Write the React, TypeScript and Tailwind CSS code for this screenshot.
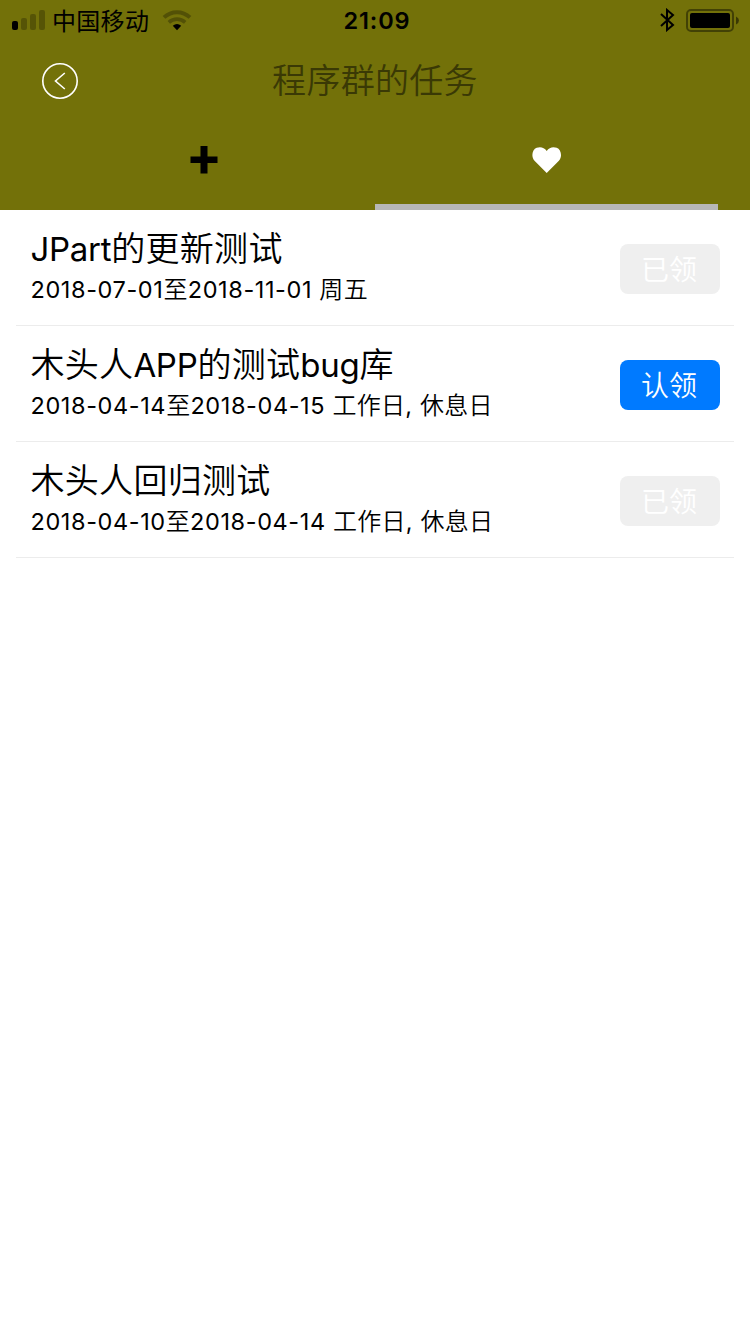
import React from "react";

type Task = { title: string; period: string; claimed: boolean };

const tasks: Task[] = [
  { title: "JPart的更新测试", period: "2018-07-01至2018-11-01 周五", claimed: true },
  { title: "木头人APP的测试bug库", period: "2018-04-14至2018-04-15 工作日, 休息日", claimed: false },
  { title: "木头人回归测试", period: "2018-04-10至2018-04-14 工作日, 休息日", claimed: true },
];

function StatusBar() {
  return (
    <div className="flex h-10 items-center justify-between pl-3 pr-2.5 text-black">
      <div className="flex w-[240px] items-center">
        <svg width="34" height="22" viewBox="0 0 34 22">
          <rect x="0" y="12" width="6" height="9" rx="2" />
          <rect x="9" y="9" width="6" height="12" rx="2" fillOpacity=".25" />
          <rect x="18" y="5" width="6" height="16" rx="2" fillOpacity=".25" />
          <rect x="27" y="1" width="6" height="20" rx="2" fillOpacity=".25" />
        </svg>
        <span className="ml-1.5 pt-[3px] text-[24px] leading-[37px] tracking-[0.3px]">中国移动</span>
        <svg className="ml-[13px] mt-px" width="30" height="22" viewBox="0 0 30 22" fill="none">
          <path d="M2 7.400C9.500.4 20.500.4 28 7.400" stroke="#000" strokeOpacity=".28" strokeWidth="4" />
          <path d="M6.800 12.300c4.700-4.300 11.700-4.300 16.400 0" stroke="#000" strokeOpacity=".28" strokeWidth="3.600" />
          <path d="M10.800 15.800q4.200-3.600 8.400 0L15 20.200Z" fill="#000" />
        </svg>
      </div>
      <span className="pl-0.5 pt-0.5 text-[23.5px] font-semibold leading-[38px] tracking-[0.9px]">21:09</span>
      <div className="flex w-[240px] items-center justify-end">
        <svg width="15" height="24" viewBox="0 0 15 24" fill="none" stroke="#000" strokeWidth="2">
          <path d="M1 6l12 11-6 5V2l6 5L1 18" />
        </svg>
        <svg className="ml-[11px]" width="54" height="24" viewBox="0 0 54 24">
          <rect x="1" y="2" width="46" height="21" rx="4" fill="none" stroke="#000" strokeOpacity=".42" strokeWidth="2" />
          <rect x="4" y="5" width="40" height="15" rx="2" />
          <path d="M50 8.500q3 1.500 3 4t-3 4Z" fillOpacity=".5" />
        </svg>
      </div>
    </div>
  );
}

function Header() {
  return (
    <header className="h-[210px] bg-[#737109]">
      <StatusBar />
      <div className="grid h-20 grid-cols-[120px_1fr_120px] items-center">
        <button className="flex justify-center pt-0.5" aria-label="返回">
          <svg width="38" height="38" viewBox="0 0 38 38" fill="none" stroke="white" strokeWidth="1.600">
            <circle cx="19" cy="19" r="17.200" />
            <path d="M23.800 11L14.500 19l9.300 8" />
          </svg>
        </button>
        <h1 className="pt-0.5 text-center text-[34px] font-[350] leading-[78px] tracking-[0.3px] text-[#3a3905]">程序群的任务</h1>
      </div>
      <nav className="grid h-[90px] w-[718px] grid-cols-[343px_343px] pl-8">
        <button className="flex justify-center pt-[25px]" aria-label="添加">
          <svg width="30" height="30" viewBox="0 0 30 30"><path d="M11.500 1h7v10.500h10v6.500h-10v10.500h-7V18h-10v-6.500h10Z" /></svg>
        </button>
        <button className="flex flex-col items-center justify-between pt-[26px]" aria-label="收藏">
          <svg width="30" height="28" viewBox="0 0 30 28" fill="white">
            <path d="M14.700 27L2.500 14.700C-1.200 10.600.2 3.500 4.700 1.800C8.400.4 12.200 1.400 14.700 4.900C17.200 1.400 21 .4 24.700 1.800C29.200 3.500 30.600 10.600 26.900 14.700Z" />
          </svg>
          <span className="h-1.5 w-full bg-[#b7b7b7]" />
        </button>
      </nav>
    </header>
  );
}

function MixedText({ text, latin, cjk }: { text: string; latin: string; cjk: string }) {
  return (
    <>
      {text.split(/([\u4e00-\u9fff]+)/).map((part, i) => (
        <span key={i} className={i % 2 ? cjk : latin}>{part}</span>
      ))}
    </>
  );
}

function TaskRow({ task }: { task: Task }) {
  return (
    <li className="flex h-[116px] items-start justify-between border-b border-[#ececec] pl-[14.5px] pr-3.5">
      <div className="whitespace-pre pt-[18px] text-black">
        <h2 className="h-[41px] text-[34px] leading-[41px]">
          <MixedText text={task.title} latin="text-[33px] font-[375] tracking-[-0.3px]" cjk="font-[350] tracking-[0.3px]" />
        </h2>
        <p className="h-10 text-[24px] leading-[41px]">
          <MixedText text={task.period} latin="text-[23.5px] font-[375] tracking-[0.6px]" cjk="font-[350] tracking-[0.3px]" />
        </p>
      </div>
      <button
        disabled={task.claimed}
        className={`mt-[34px] h-[50px] w-[100px] rounded-lg pr-0.5 pt-0.5 text-[28px] font-[350] leading-[48px] text-white ${task.claimed ? "bg-[#efefef]" : "bg-[#007aff]"}`}
      >
        {task.claimed ? "已领" : "认领"}
      </button>
    </li>
  );
}

export default function App() {
  return (
    <main className="h-[1334px] w-[750px] overflow-hidden bg-white font-['Inter','Noto_Sans_CJK_SC',sans-serif]">
      <Header />
      <ul className="mx-4">
        {tasks.map((task) => <TaskRow key={task.title} task={task} />)}
      </ul>
    </main>
  );
}
